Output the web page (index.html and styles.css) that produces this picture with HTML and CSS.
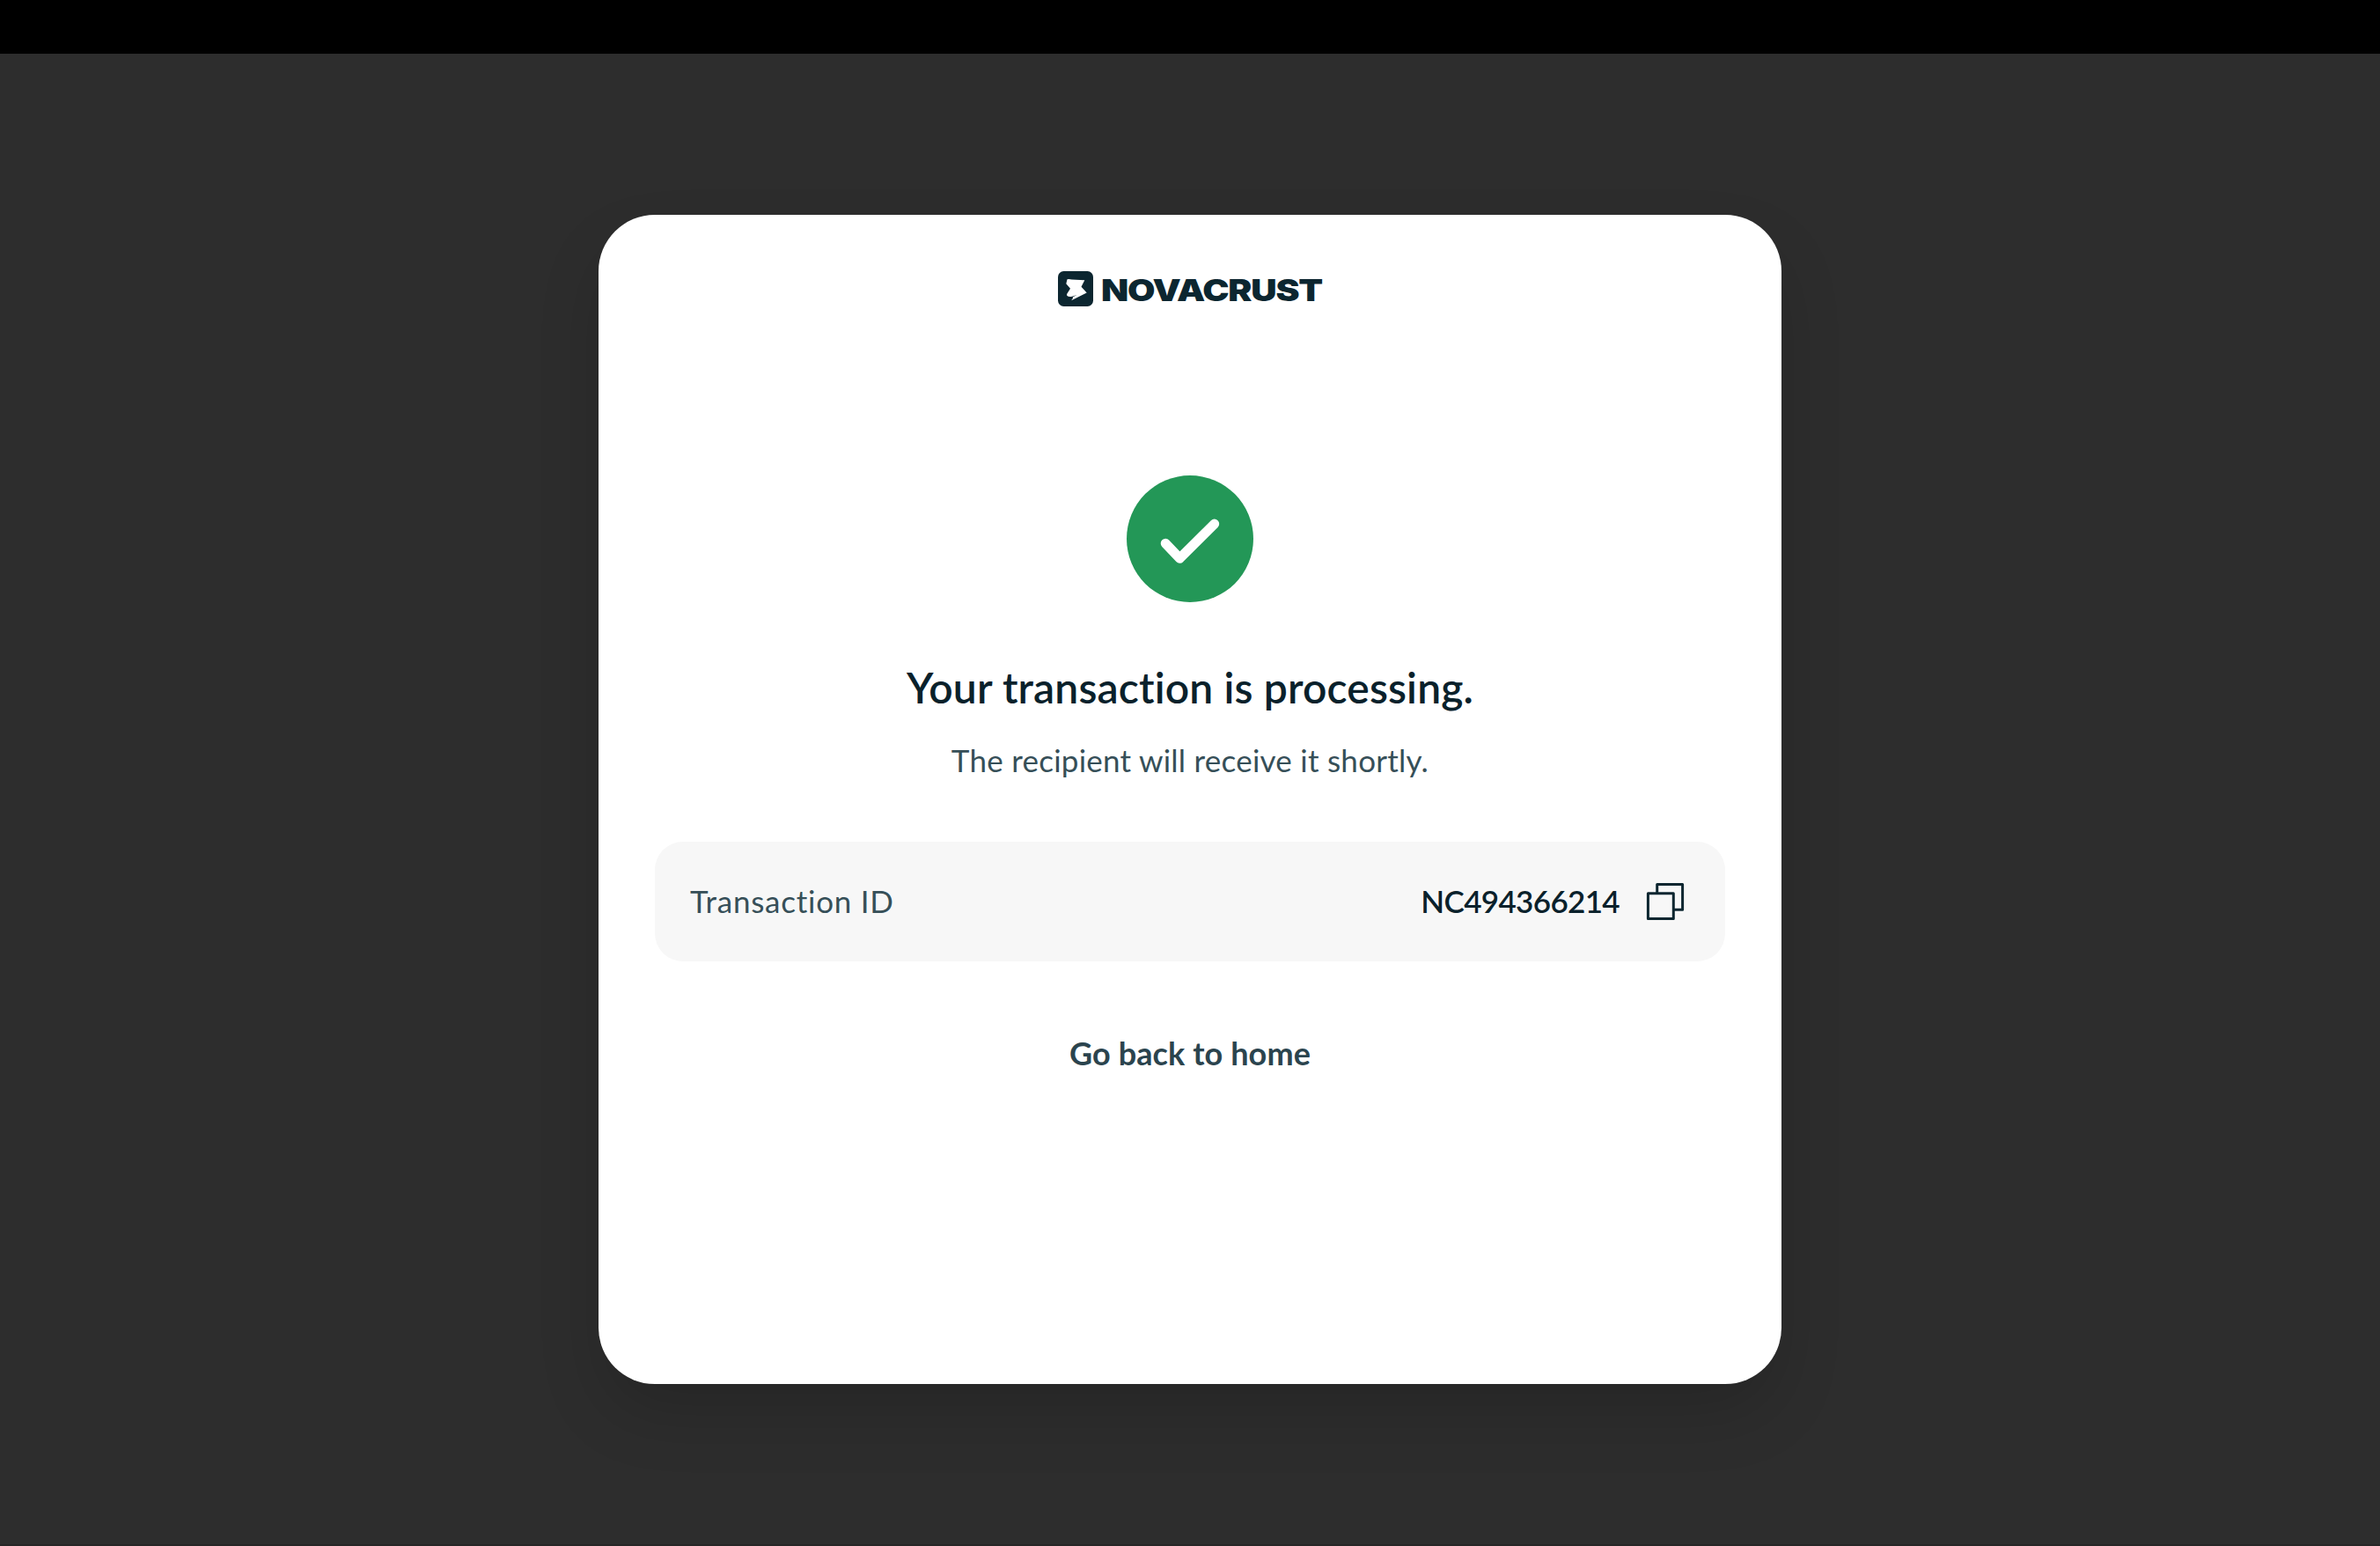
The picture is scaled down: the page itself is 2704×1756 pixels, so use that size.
FILE: index.html
```html
<!DOCTYPE html>
<html lang="en">
<head>
<meta charset="utf-8">
<title>Novacrust</title>
<link rel="stylesheet" href="styles.css">
</head>
<body>
<main class="page">
  <section class="card">
    <header class="brand">
      <svg class="brand-mark" viewBox="0 0 40 40" aria-hidden="true">
        <rect width="40" height="40" rx="6.5" fill="#0c2630"/>
        <path d="M10.5 9.2Q13 8.6 15.5 9.6L30.3 10.2L26.5 17.8L32.7 24.5L15.2 33.2L17.2 30.3L16.6 29.4L21.5 27.1L15 28.9Q12 29.4 10.2 27.7L10.1 26L14 19.8L9.3 14.2Z" fill="#fff"/>
      </svg>
      <span class="brand-name">NOVACRUST</span>
    </header>
    <svg class="success" viewBox="0 0 144 144" aria-hidden="true">
      <circle cx="72" cy="72" r="72" fill="#239757"/>
      <path d="M44.2 77.2L60.4 94.2L99.7 55.1" fill="none" stroke="#fff" stroke-width="11" stroke-linecap="round" stroke-linejoin="round"/>
    </svg>
    <h1 class="title">Your transaction is processing.</h1>
    <p class="subtitle">The recipient will receive it shortly.</p>
    <div class="detail">
      <span class="detail-label">Transaction ID</span>
      <span class="detail-value">NC494366214</span>
      <svg class="copy" viewBox="0 0 56 56" fill="none" stroke="#0c2630" stroke-width="3" stroke-linejoin="round" aria-hidden="true">
        <path d="M18.7 18V8.4H47.6V37.3H38"/>
        <rect x="8.4" y="18.7" width="28.9" height="28.9"/>
      </svg>
    </div>
    <a class="home">Go back to home</a>
  </section>
</main>
</body>
</html>
```
FILE: styles.css
```css
* { box-sizing: border-box; }
body {
  margin: 0;
  background: #2d2d2d;
  font-family: Lato, "Open Sans", sans-serif;
  font-variant-ligatures: none;
  color: #0a212b;
}
.page {
  height: 1756px;
  border-top: 61px solid #000;
  border-bottom: 2px solid #262626;
  padding-top: 183px;
  display: flex;
  justify-content: center;
  align-items: flex-start;
}
.card {
  width: 1344px;
  height: 1328px;
  padding: 64px;
  border-radius: 64px;
  background: #fff;
  box-shadow: 0 36px 76px -8px rgba(0, 0, 0, .17);
  display: flex;
  flex-direction: column;
  align-items: center;
}
.brand {
  width: 300px;
  height: 40px;
  display: flex;
  align-items: center;
  gap: 9px;
}
.brand-mark { width: 40px; height: 40px; flex: none; }
.brand-name {
  font: 900 34px/40px Inter, sans-serif;
  color: #0c2630;
  letter-spacing: -1px;
  white-space: nowrap;
  padding-top: 4px;
  transform: scaleX(1.195);
  transform-origin: left;
}
.success { width: 144px; height: 144px; margin-top: 192px; }
.title {
  margin: 67px 0 0;
  font-size: 48px;
  line-height: 60px;
  font-weight: 600;
  letter-spacing: .15px;
  white-space: nowrap;
}
.subtitle {
  margin: 29px 0 0;
  font-size: 35px;
  line-height: 46px;
  letter-spacing: .25px;
  color: #364f58;
  white-space: nowrap;
}
.detail {
  width: 100%;
  height: 136px;
  margin-top: 70px;
  padding: 0 40px;
  border-radius: 32px;
  background: #f7f7f7;
  display: flex;
  align-items: center;
  font-size: 35px;
  line-height: 46px;
}
.detail-label { color: #364f58; letter-spacing: .75px; padding-bottom: 3px; }
.detail-value { margin-left: auto; font-weight: 600; letter-spacing: -.65px; padding-bottom: 3px; }
.copy { width: 56px; height: 56px; margin-left: 24px; }
.home {
  margin-top: 81px;
  font-size: 36px;
  line-height: 46px;
  font-weight: 700;
  letter-spacing: .1px;
  color: #2b444e;
}
```
